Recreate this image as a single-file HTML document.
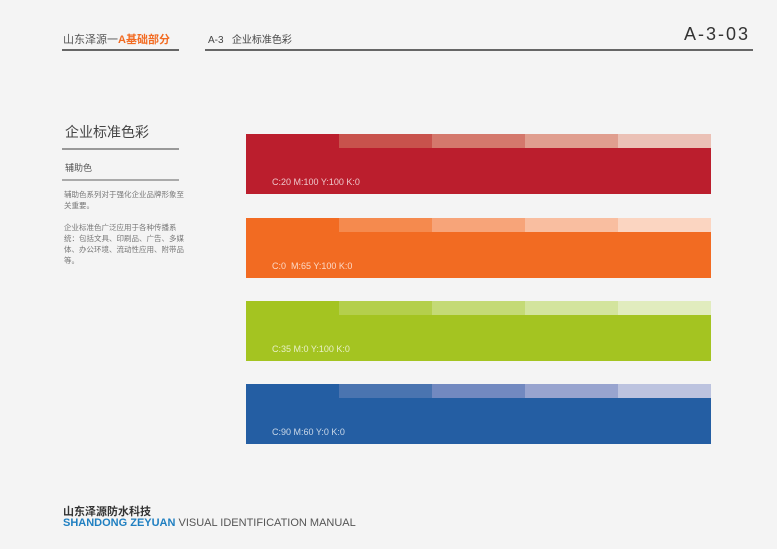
<!DOCTYPE html><html><head><meta charset="utf-8"><style>
body{margin:0;width:777px;height:549px;background:#f4f4f4;position:relative;overflow:hidden;font-family:"Liberation Sans","Noto Sans CJK SC",sans-serif}
.a{position:absolute}
.strip{position:absolute;left:246px;width:465px;height:14px;display:flex}
.strip div{flex:1}
.main{position:absolute;left:246px;width:465px;height:46px}
.main span{position:absolute;left:26px;top:29px;font-size:9px;color:rgba(255,255,255,.75)}
</style></head><body>
<div class="a" style="left:63px;top:31px;font-size:11px;color:#555">山东泽源一<b style="color:#f26b22">A基础部分</b></div>
<div class="a" style="left:62px;top:49px;width:117px;height:2px;background:#666"></div>
<div class="a" style="left:208px;top:31px;font-size:10px;color:#444">A-3&nbsp;&nbsp; 企业标准色彩</div>
<div class="a" style="left:205px;top:49px;width:548px;height:2px;background:#666"></div>
<div class="a" style="left:684px;top:24px;font-size:18px;color:#333;letter-spacing:2px">A-3-03</div>
<div class="a" style="left:65px;top:122px;font-size:14px;color:#444">企业标准色彩</div>
<div class="a" style="left:62px;top:148px;width:117px;height:2px;background:#999"></div>
<div class="a" style="left:65px;top:161px;font-size:9px;color:#555">辅助色</div>
<div class="a" style="left:62px;top:179px;width:117px;height:2px;background:#aaa"></div>
<div class="a" style="left:64px;top:189px;width:120px;font-size:7.5px;line-height:11px;color:#777">辅助色系列对于强化企业品牌形象至关重要。<br><br>企业标准色广泛应用于各种传播系统：包括文具、印刷品、广告、多媒体、办公环境、流动性应用、附带品等。</div>
<div class="strip" style="top:134px"><div style="background:#bb1e2d"></div><div style="background:#c8524c"></div><div style="background:#d4786c"></div><div style="background:#e09e8f"></div><div style="background:#ebc1b6"></div></div>
<div class="main" style="top:148px;background:#bb1e2d"><span>C:20 M:100 Y:100 K:0</span></div>
<div class="strip" style="top:218px"><div style="background:#f26b22"></div><div style="background:#f58a4e"></div><div style="background:#f7a479"></div><div style="background:#f9bea0"></div><div style="background:#fbd5c1"></div></div>
<div class="main" style="top:232px;background:#f26b22"><span>C:0&nbsp; M:65 Y:100 K:0</span></div>
<div class="strip" style="top:301px"><div style="background:#a4c421"></div><div style="background:#b4cf4c"></div><div style="background:#c4da76"></div><div style="background:#d3e49d"></div><div style="background:#e1ecbe"></div></div>
<div class="main" style="top:315px;background:#a4c421"><span>C:35 M:0 Y:100 K:0</span></div>
<div class="strip" style="top:384px"><div style="background:#245ea3"></div><div style="background:#4a74b0"></div><div style="background:#7289c0"></div><div style="background:#98a4cf"></div><div style="background:#bcc3df"></div></div>
<div class="main" style="top:398px;background:#245ea3"><span>C:90 M:60 Y:0 K:0</span></div>
<div class="a" style="left:63px;top:503px;font-size:11px;font-weight:bold;color:#333">山东泽源防水科技</div>
<div class="a" style="left:63px;top:517px;font-size:11px;color:#555"><b style="color:#1f7fc1">SHANDONG ZEYUAN</b> VISUAL IDENTIFICATION MANUAL</div>
</body></html>
